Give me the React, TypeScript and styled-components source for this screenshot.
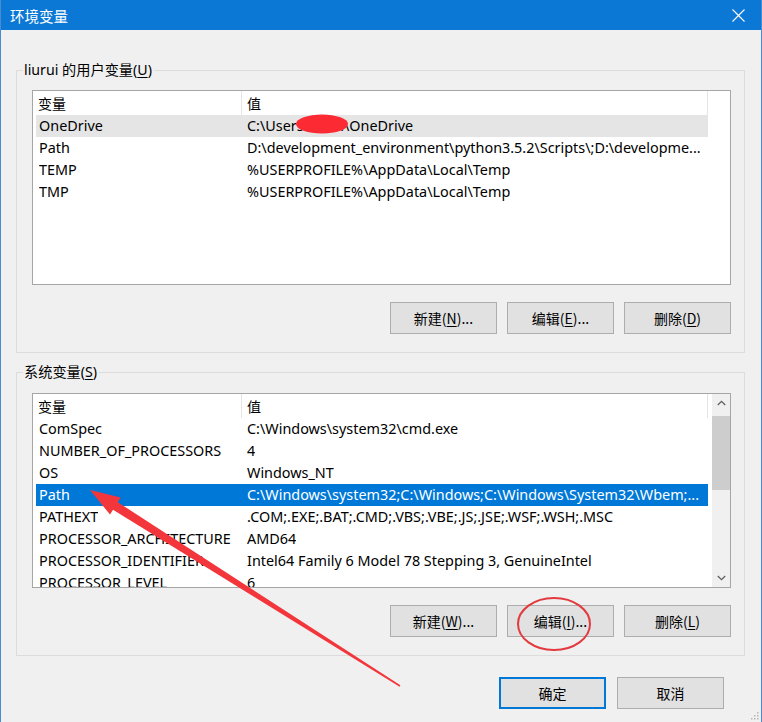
import React from "react";
import styled, { createGlobalStyle } from "styled-components";

const Global = createGlobalStyle`
  html, body { margin: 0; padding: 0; background: #f0f0f0; }
  body {
    font-family: "Noto Sans", "Noto Sans CJK SC", sans-serif;
    font-size: 14px;
    color: #000;
  }
`;

const Window = styled.div`
  position: relative;
  width: 762px;
  height: 722px;
  box-sizing: border-box;
  border-left: 1px solid #4a8ad0;
  border-right: 1px solid #4a8ad0;
  background: #f0f0f0;
  display: flex;
  flex-direction: column;
  overflow: hidden;
`;

const TitleBar = styled.div`
  height: 30px;
  flex-shrink: 0;
  background: #0b78d5;
  color: #fff;
  display: flex;
  align-items: center;
  justify-content: space-between;
  padding-left: 9px;
  font-family: "Noto Sans CJK SC", sans-serif;
  font-size: 14.5px;
`;

const CloseBtn = styled.div`
  width: 46px;
  height: 30px;
  display: flex;
  align-items: center;
  justify-content: center;
`;

const Body = styled.div`
  flex: 1;
  display: flex;
  flex-direction: column;
  padding: 0 16px 0 15px;
`;

const Group = styled.fieldset<{ $mt: number }>`
  margin: ${(p) => p.$mt}px 0 0 0;
  padding: 0;
  border: 1px solid #dcdcdc;
  min-inline-size: 0;
`;

const Legend = styled.legend`
  margin-left: 6px;
  padding: 0 2px 0 1px;
  line-height: 20px;
  height: 20px;
  font-family: "Noto Sans", "Noto Sans CJK SC", sans-serif;
  font-size: 14.2px;
  color: #000;
`;

const GroupInner = styled.div<{ $pt: number }>`
  padding: ${(p) => p.$pt}px 13px 18px 15px;
  display: flex;
  flex-direction: column;
`;

const ListBox = styled.div`
  height: 195px;
  box-sizing: border-box;
  border: 1px solid #a6a6a6;
  background: #fff;
  display: flex;
  overflow: hidden;
`;

const ListMain = styled.div`
  flex: 1;
  min-width: 0;
  padding-left: 3px;
  overflow: hidden;
  font-size: 14.4px;
`;

const Row = styled.div<{ $sel?: "active" | "inactive" }>`
  display: flex;
  width: 672px;
  height: 22px;
  align-items: center;
  white-space: nowrap;
  background: ${(p) =>
    p.$sel === "active" ? "#0078d7" : p.$sel === "inactive" ? "#e5e5e5" : "transparent"};
  color: ${(p) => (p.$sel === "active" ? "#fff" : "#000")};
`;

const HeaderRow = styled(Row)`
  height: 24px;
  align-items: stretch;
  font-family: "Noto Sans CJK SC", sans-serif;
  font-size: 14px;
`;

const Cell = styled.div<{ $w: number; $pl: number; $div?: boolean }>`
  width: ${(p) => p.$w}px;
  flex-shrink: 0;
  box-sizing: border-box;
  padding-left: ${(p) => p.$pl}px;
  padding-right: 4px;
  overflow: hidden;
  white-space: nowrap;
  line-height: 22px;
  display: flex;
  align-items: center;
  border-right: ${(p) => (p.$div ? "1px solid #e5e5e5" : "none")};
`;

const CellText = styled.span`
  overflow: hidden;
  text-overflow: ellipsis;
  white-space: nowrap;
`;

const ScrollBar = styled.div`
  width: 18px;
  flex-shrink: 0;
  background: #f0f0f0;
  display: flex;
  flex-direction: column;
  align-items: center;
`;

const ScrollArrow = styled.div`
  width: 18px;
  height: 18px;
  display: flex;
  align-items: center;
  justify-content: center;
  flex-shrink: 0;
`;

const ScrollTrack = styled.div`
  flex: 1;
  width: 18px;
  padding-top: 4px;
  box-sizing: border-box;
`;

const Thumb = styled.div`
  width: 18px;
  height: 74px;
  background: #cdcdcd;
`;

const ButtonRow = styled.div`
  display: flex;
  justify-content: flex-end;
  gap: 10px;
  margin-top: 17px;
`;

const Btn = styled.button<{ $default?: boolean }>`
  width: 107px;
  height: 32px;
  box-sizing: border-box;
  background: #e1e1e1;
  border: 1px solid ${(p) => (p.$default ? "#0078d7" : "#adadad")};
  box-shadow: ${(p) => (p.$default ? "inset 0 0 0 1px #0078d7" : "none")};
  font-family: "Noto Sans CJK SC", "Noto Sans", sans-serif;
  font-size: 14px;
  color: #000;
  padding: 0;
  display: flex;
  align-items: center;
  justify-content: center;
`;

const Footer = styled.div`
  display: flex;
  justify-content: flex-end;
  gap: 11px;
  margin-top: 21px;
  margin-right: 21px;
`;

const Annotations = styled.svg`
  position: absolute;
  left: -1px;
  top: 0;
  width: 762px;
  height: 722px;
  pointer-events: none;
`;

const Grip = styled.svg`
  position: absolute;
  right: 2px;
  bottom: 2px;
`;

type R = [string, string];

const userRows: R[] = [
  ["OneDrive", "C:\\Users\\liurui\\OneDrive"],
  ["Path", "D:\\development_environment\\python3.5.2\\Scripts\\;D:\\developme..."],
  ["TEMP", "%USERPROFILE%\\AppData\\Local\\Temp"],
  ["TMP", "%USERPROFILE%\\AppData\\Local\\Temp"],
];

const sysRows: R[] = [
  ["ComSpec", "C:\\Windows\\system32\\cmd.exe"],
  ["NUMBER_OF_PROCESSORS", "4"],
  ["OS", "Windows_NT"],
  ["Path", "C:\\Windows\\system32;C:\\Windows;C:\\Windows\\System32\\Wbem;..."],
  ["PATHEXT", ".COM;.EXE;.BAT;.CMD;.VBS;.VBE;.JS;.JSE;.WSF;.WSH;.MSC"],
  ["PROCESSOR_ARCHITECTURE", "AMD64"],
  ["PROCESSOR_IDENTIFIER", "Intel64 Family 6 Model 78 Stepping 3, GenuineIntel"],
  ["PROCESSOR_LEVEL", "6"],
];

function Header() {
  return (
    <HeaderRow>
      <Cell $w={206} $pl={2} $div>
        <CellText>变量</CellText>
      </Cell>
      <Cell $w={466} $pl={5} $div>
        <CellText>值</CellText>
      </Cell>
    </HeaderRow>
  );
}

function VarList({
  rows,
  selected,
  selKind,
  scroll,
}: {
  rows: R[];
  selected: number;
  selKind: "active" | "inactive";
  scroll?: boolean;
}) {
  return (
    <ListBox>
      <ListMain>
        <Header />
        {rows.map(([k, v], i) => (
          <Row key={k + i} $sel={i === selected ? selKind : undefined}>
            <Cell $w={206} $pl={3}>
              <CellText>{k}</CellText>
            </Cell>
            <Cell $w={466} $pl={5}>
              <CellText>{v}</CellText>
            </Cell>
          </Row>
        ))}
      </ListMain>
      {scroll && (
        <ScrollBar>
          <ScrollArrow>
            <svg width="9" height="6" viewBox="0 0 9 6">
              <path d="M0.8 5 L4.5 1.3 L8.2 5" fill="none" stroke="#606060" strokeWidth="1.3" />
            </svg>
          </ScrollArrow>
          <ScrollTrack>
            <Thumb />
          </ScrollTrack>
          <ScrollArrow>
            <svg width="9" height="6" viewBox="0 0 9 6">
              <path d="M0.8 1 L4.5 4.7 L8.2 1" fill="none" stroke="#606060" strokeWidth="1.3" />
            </svg>
          </ScrollArrow>
        </ScrollBar>
      )}
    </ListBox>
  );
}

function Mn({ children }: { children: React.ReactNode }) {
  return <u style={{ textUnderlineOffset: "2px" }}>{children}</u>;
}

export default function App() {
  // red arrow geometry
  const T = { x: 90, y: 490 };
  const P = { x: 400, y: 686 };
  const dx = P.x - T.x;
  const dy = P.y - T.y;
  const len = Math.hypot(dx, dy);
  const u = { x: dx / len, y: dy / len };
  const n = { x: -u.y, y: u.x };
  const hl = 30;
  const hw = 10;
  const sw = 4.5;
  const tw = 0.8;
  const B = { x: T.x + u.x * hl, y: T.y + u.y * hl };
  const pts = [
    [T.x, T.y],
    [B.x - n.x * hw, B.y - n.y * hw],
    [B.x - n.x * sw, B.y - n.y * sw],
    [P.x - n.x * tw, P.y - n.y * tw],
    [P.x + n.x * tw, P.y + n.y * tw],
    [B.x + n.x * sw, B.y + n.y * sw],
    [B.x + n.x * hw, B.y + n.y * hw],
  ]
    .map((p) => p.map((v) => v.toFixed(1)).join(","))
    .join(" ");

  return (
    <>
      <Global />
      <Window>
        <TitleBar>
          <span>环境变量</span>
          <CloseBtn>
            <svg width="13" height="13" viewBox="0 0 13 13">
              <path d="M0.5 0.5 L12.5 12.5 M12.5 0.5 L0.5 12.5" stroke="#fff" strokeWidth="1.1" />
            </svg>
          </CloseBtn>
        </TitleBar>
        <Body>
          <Group $mt={30}>
            <Legend>liurui 的用户变量(<Mn>U</Mn>)</Legend>
            <GroupInner $pt={10}>
              <VarList rows={userRows} selected={0} selKind="inactive" />
              <ButtonRow>
                <Btn>新建(<Mn>N</Mn>)...</Btn>
                <Btn>编辑(<Mn>E</Mn>)...</Btn>
                <Btn>删除(<Mn>D</Mn>)</Btn>
              </ButtonRow>
            </GroupInner>
          </Group>
          <Group $mt={9}>
            <Legend>系统变量(<Mn>S</Mn>)</Legend>
            <GroupInner $pt={11}>
              <VarList rows={sysRows} selected={3} selKind="active" scroll />
              <ButtonRow>
                <Btn>新建(<Mn>W</Mn>)...</Btn>
                <Btn>编辑(<Mn>I</Mn>)...</Btn>
                <Btn>删除(<Mn>L</Mn>)</Btn>
              </ButtonRow>
            </GroupInner>
          </Group>
          <Footer>
            <Btn $default>确定</Btn>
            <Btn>取消</Btn>
          </Footer>
        </Body>
        <Grip width="10" height="10" viewBox="0 0 10 10">
          <g fill="#b8b8b8">
            <rect x="8" y="2" width="1.5" height="1.5" />
            <rect x="5" y="5" width="1.5" height="1.5" />
            <rect x="8" y="5" width="1.5" height="1.5" />
            <rect x="2" y="8" width="1.5" height="1.5" />
            <rect x="5" y="8" width="1.5" height="1.5" />
            <rect x="8" y="8" width="1.5" height="1.5" />
          </g>
        </Grip>
        <Annotations viewBox="0 0 762 722">
          <ellipse cx="322" cy="124" rx="26" ry="9.5" fill="#fb2a33" />
          <ellipse cx="554" cy="624" rx="36" ry="26" fill="none" stroke="#e23a3f" strokeWidth="2" />
          <polygon points={pts} fill="#f2363c" />
        </Annotations>
      </Window>
    </>
  );
}
